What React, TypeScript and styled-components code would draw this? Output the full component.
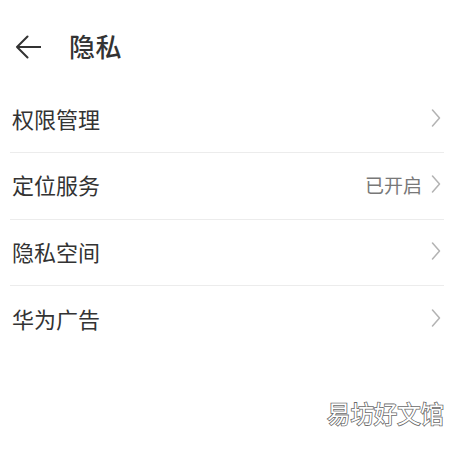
import React from "react";
import styled, { createGlobalStyle } from "styled-components";

const Global = createGlobalStyle`
  html, body { margin: 0; padding: 0; background: #ffffff; }
  body { font-family: "Noto Sans CJK SC", "Noto Sans", sans-serif; }
`;

const Page = styled.div`
  position: relative;
  width: 474px;
  height: 450px;
  background: #ffffff;
  overflow: hidden;
`;

const Header = styled.div`
  box-sizing: border-box;
  height: 86.5px;
  padding: 8px 0 0 15px;
  display: flex;
  align-items: center;
  gap: 28px;
`;

const Title = styled.h1`
  margin: 0 0 3px 0;
  font-size: 26px;
  font-weight: 500;
  color: #333333;
  line-height: 1;
  letter-spacing: 0.5px;
`;

const List = styled.div`
  margin: 0 30px 0 10px;
  display: flex;
  flex-direction: column;
`;

const Row = styled.div<{ $last?: boolean }>`
  box-sizing: border-box;
  height: 66.5px;
  padding: 0 3px 3px 2px;
  display: flex;
  align-items: center;
  border-bottom: ${(p) => (p.$last ? "none" : "1px solid #ececec")};
`;

const Label = styled.span`
  flex: 1;
  font-size: 22px;
  color: #333333;
  line-height: 1;
`;

const Value = styled.span`
  font-size: 19px;
  color: #787878;
  margin-right: 9px;
  line-height: 1;
`;

const Watermark = styled.div`
  position: absolute;
  left: 327px;
  top: 402px;
  font-size: 23.4px;
  line-height: 1;
  color: #ffffff;
  -webkit-text-stroke: 1.6px #6a6a6a;
  paint-order: stroke fill;
  letter-spacing: 0;
`;

const BackArrow = () => (
  <svg width="26" height="24" viewBox="0 0 26 24" fill="none">
    <path d="M12.5 1.5 L2 12 L12.5 22.5 M2 12 H25.5" stroke="#333" strokeWidth="2" strokeLinecap="round" strokeLinejoin="round" />
  </svg>
);

const Chevron = () => (
  <svg width="10" height="18" viewBox="0 0 10 18" fill="none">
    <path d="M1.5 1 L8.5 9 L1.5 17" stroke="#b3b3b3" strokeWidth="1.5" strokeLinecap="round" strokeLinejoin="round" />
  </svg>
);

const items: { label: string; value?: string }[] = [
  { label: "权限管理" },
  { label: "定位服务", value: "已开启" },
  { label: "隐私空间" },
  { label: "华为广告" },
];

export default function App() {
  return (
    <Page>
      <Global />
      <Header>
        <BackArrow />
        <Title>隐私</Title>
      </Header>
      <List>
        {items.map((it, i) => (
          <Row key={it.label} $last={i === items.length - 1}>
            <Label>{it.label}</Label>
            {it.value && <Value>{it.value}</Value>}
            <Chevron />
          </Row>
        ))}
      </List>
      <Watermark>易坊好文馆</Watermark>
    </Page>
  );
}
